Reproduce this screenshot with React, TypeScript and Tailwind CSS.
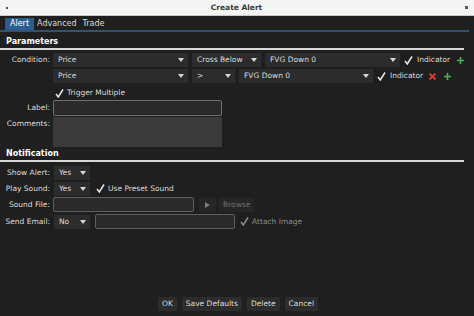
import React from 'react';

const font = { fontFamily: '"DejaVu Sans", "Noto Sans", sans-serif' };

function Arrow() {
  return (
    <svg width="6" height="4" viewBox="0 0 6 4" className="shrink-0">
      <path d="M0 0H6L3 4Z" fill="#d8d8d8" />
    </svg>
  );
}

function Check({ dim = false }: { dim?: boolean }) {
  return (
    <svg width="9" height="9" viewBox="0 0 9 9" className="shrink-0">
      <path d="M1 5L3.3 8L8 0.5" fill="none" stroke={dim ? '#8a8a8a' : '#e8e8e8'} strokeWidth="1.5" />
    </svg>
  );
}

function Plus() {
  return (
    <svg width="7" height="7" viewBox="0 0 7 7" className="shrink-0">
      <path d="M3.5 0V7M0 3.5H7" stroke="#4caf50" strokeWidth="1.6" />
    </svg>
  );
}

function Cross() {
  return (
    <svg width="7" height="7" viewBox="0 0 7 7" className="shrink-0">
      <path d="M0.5 0.5L6.5 6.5M6.5 0.5L0.5 6.5" stroke="#e53935" strokeWidth="1.8" />
    </svg>
  );
}

function Select({ value, w }: { value: string; w: string }) {
  return (
    <div className={`${w} h-[14px] bg-[#2c2c2c] flex items-center justify-between pl-[5px] pr-[4px] shrink-0`}>
      <span>{value}</span>
      <Arrow />
    </div>
  );
}

function Label({ text }: { text: string }) {
  return <div className="w-[50px] text-right shrink-0">{text}</div>;
}

export default function App() {
  return (
    <div style={font} className="w-[474px] h-[316px] bg-[#1f1f1f] text-[#dcdcdc] text-[7.5px] leading-none flex flex-col overflow-hidden">
      <div className="h-[16px] bg-[#f4f4f4] border-b border-[#c8c8c8] flex items-center justify-between px-[6px] shrink-0">
        <div className="w-[2px] h-[2px] bg-[#555]" />
        <span className="font-bold text-[#3a3a3a] text-[7.5px]">Create Alert</span>
        <div className="w-[3px] h-[3px] bg-[#555]" />
      </div>
      <div className="h-[14px] mt-[2px] flex items-stretch border-b-2 border-[#34516d] mr-[5px] shrink-0 text-[8px]">
        <div className="bg-[#2c5d8c] text-white px-[5px] flex items-center ml-[5px]">Alert</div>
        <div className="px-[3px] flex items-center">Advanced</div>
        <div className="px-[3px] flex items-center">Trade</div>
      </div>

      <div className="mt-[5px] pl-[6px] font-bold text-[8px] text-white h-[10px] flex items-center">Parameters</div>
      <div className="mt-[1px] h-[2px] bg-[#d8d8d8] w-[464px]" />

      <div className="mt-[3px] flex items-center h-[14px]">
        <Label text="Condition:" />
        <div className="ml-[3px] flex items-center gap-[4px]">
          <Select value="Price" w="w-[135px]" />
          <Select value="Cross Below" w="w-[69px]" />
          <Select value="FVG Down 0" w="w-[135px]" />
          <Check />
          <span>Indicator</span>
          <span className="ml-[3px]"><Plus /></span>
        </div>
      </div>
      <div className="mt-[2px] flex items-center h-[14px]">
        <div className="w-[50px] shrink-0" />
        <div className="ml-[3px] flex items-center gap-[4px]">
          <Select value="Price" w="w-[135px]" />
          <Select value=">" w="w-[43px]" />
          <Select value="FVG Down 0" w="w-[134px]" />
          <Check />
          <span>Indicator</span>
          <span className="ml-[2px]"><Cross /></span>
          <span className="ml-[4px]"><Plus /></span>
        </div>
      </div>
      <div className="mt-[4px] h-[12px] flex items-center pl-[55px] gap-[3px]">
        <Check />
        <span>Trigger Multiple</span>
      </div>
      <div className="mt-[1px] flex items-center h-[16px]">
        <Label text="Label:" />
        <div className="ml-[3px] w-[169px] h-[16px] bg-[#2a2a2a] border border-[#707070] rounded-[2px]" />
      </div>
      <div className="mt-[1px] flex items-start h-[30px]">
        <div className="w-[50px] text-right shrink-0 pt-[3px]">Comments:</div>
        <div className="ml-[3px] w-[169px] h-[30px] bg-[#3a3a3a]" />
      </div>

      <div className="mt-[2px] pl-[6px] font-bold text-[8px] text-white h-[10px] flex items-center">Notification</div>
      <div className="mt-[1px] h-[2px] bg-[#d8d8d8] w-[464px]" />

      <div className="mt-[4px] flex items-center h-[13px]">
        <Label text="Show Alert:" />
        <div className="ml-[4px]"><Select value="Yes" w="w-[36px]" /></div>
      </div>
      <div className="mt-[3px] flex items-center h-[13px]">
        <Label text="Play Sound:" />
        <div className="ml-[4px] flex items-center">
          <Select value="Yes" w="w-[36px]" />
          <span className="ml-[6px]"><Check /></span>
          <span className="ml-[3px]">Use Preset Sound</span>
        </div>
      </div>
      <div className="mt-[2px] flex items-center h-[15px]">
        <Label text="Sound File:" />
        <div className="ml-[3px] w-[141px] h-[15px] bg-[#2a2a2a] border border-[#5e5e5e] rounded-[2px]" />
        <div className="ml-[5px] w-[17px] h-[14px] bg-[#262626] flex items-center justify-center">
          <svg width="5" height="6" viewBox="0 0 5 6"><path d="M0 0L5 3L0 6Z" fill="#7a7a7a" /></svg>
        </div>
        <div className="ml-[3px] h-[14px] px-[4px] bg-[#262626] flex items-center text-[#707070]">Browse</div>
      </div>
      <div className="mt-[2px] flex items-center h-[15px]">
        <Label text="Send Email:" />
        <div className="ml-[4px]"><Select value="No" w="w-[36px]" /></div>
        <div className="ml-[5px] w-[140px] h-[15px] bg-[#2a2a2a] border border-[#5e5e5e] rounded-[2px]" />
        <span className="ml-[5px]"><Check dim /></span>
        <span className="ml-[3px] text-[#8a8a8a]">Attach Image</span>
      </div>

      <div className="flex-1" />
      <div className="mb-[5px] flex justify-center gap-[5px] pl-[2px]">
        {['OK', 'Save Defaults', 'Delete', 'Cancel'].map((b) => (
          <div key={b} className="h-[14px] px-[4px] bg-[#2c2c2c] flex items-center">{b}</div>
        ))}
      </div>
    </div>
  );
}
